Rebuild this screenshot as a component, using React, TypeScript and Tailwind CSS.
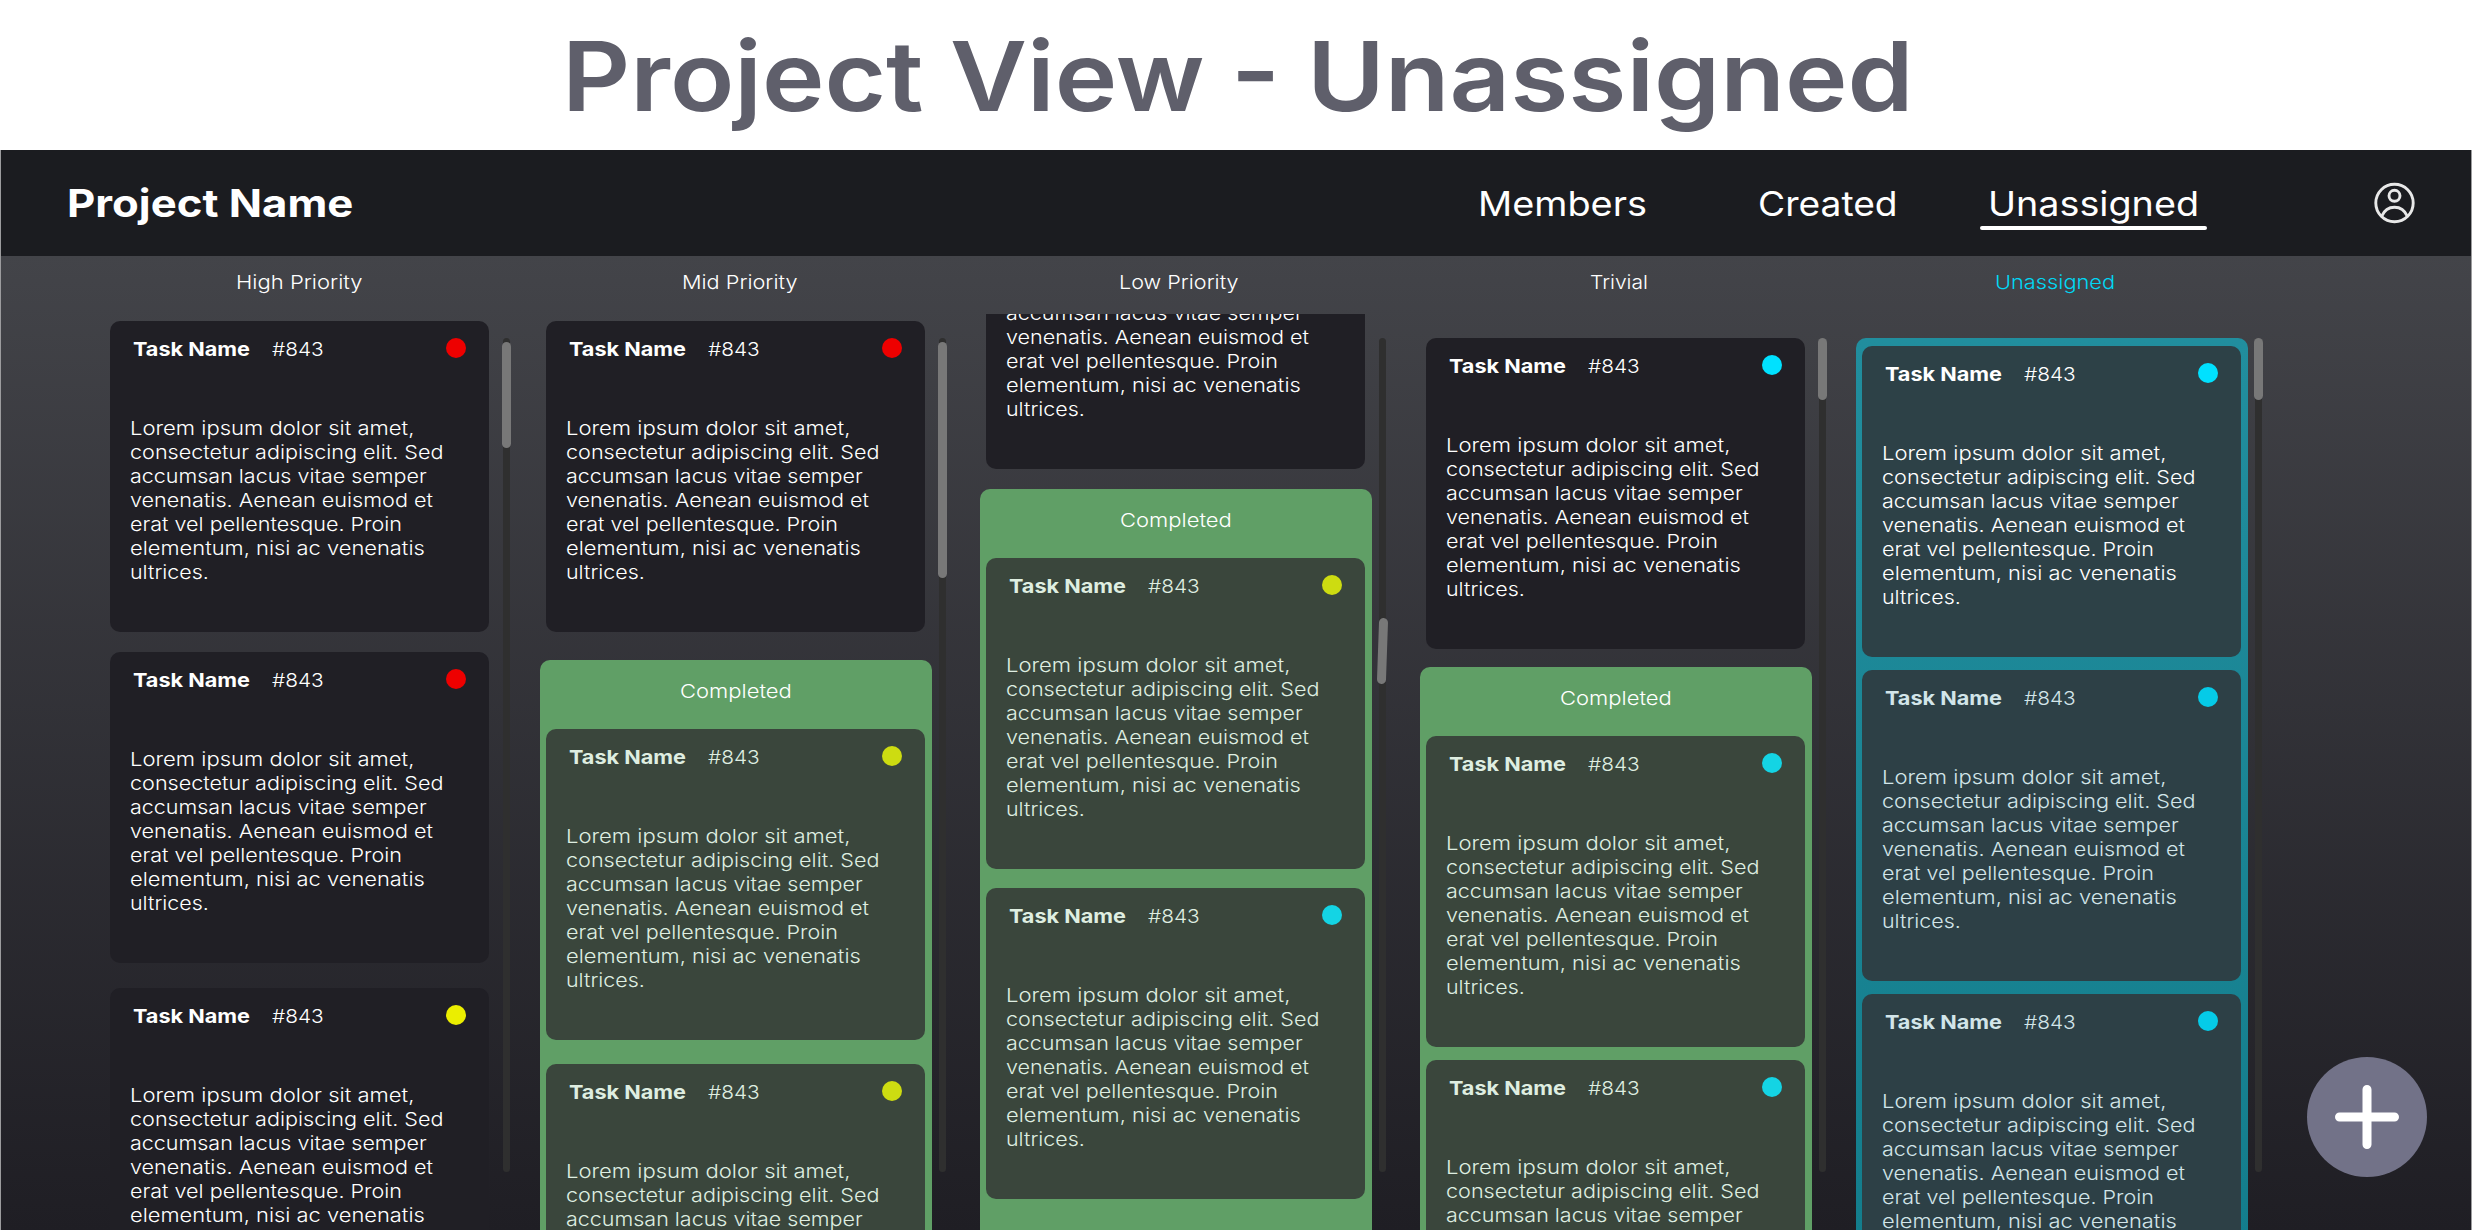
import { useLayoutEffect, useRef, useState } from "react";

/** A single line of text stretched horizontally to an exact advance width. */
function Line({ w, className = "", children }: { w: number; className?: string; children: string }) {
  const ref = useRef<HTMLSpanElement>(null);
  const [scale, setScale] = useState(1);
  useLayoutEffect(() => {
    if (ref.current) setScale(w / ref.current.offsetWidth);
  }, [w]);
  return (
    <span className={`block whitespace-nowrap ${className}`} style={{ width: w }}>
      <span ref={ref} className="inline-block origin-left" style={{ transform: `scaleX(${scale})` }}>
        {children}
      </span>
    </span>
  );
}

const BODY: [string, number][] = [
  ["Lorem ipsum dolor sit amet,", 284],
  ["consectetur adipiscing elit. Sed", 313],
  ["accumsan lacus vitae semper", 297],
  ["venenatis. Aenean euismod et", 303],
  ["erat vel pellentesque. Proin", 272],
  ["elementum, nisi ac venenatis", 294.5],
  ["ultrices.", 79],
];

type Tone = "plain" | "done" | "open" | "openDim";

const CARD: Record<Tone, string> = {
  plain: "bg-[#201f25] text-white",
  done: "bg-[#3a463c] text-[#dfeee1]",
  open: "bg-[#2d4147] text-white",
  openDim: "bg-[#2d4046] text-[#d2e5e9]",
};

function Body({ from = 0, className = "" }: { from?: number; className?: string }) {
  return (
    <div className={`pl-5 text-[19.25px] leading-6 font-light ${className}`}>
      {BODY.slice(from).map(([text, w]) => (
        <Line key={text} w={w}>{text}</Line>
      ))}
    </div>
  );
}

function Card({ tone = "plain", dot, className = "" }: { tone?: Tone; dot: string; className?: string }) {
  return (
    <article className={`h-[311px] w-[379px] shrink-0 rounded-[10px] pt-4 ${CARD[tone]} ${className}`}>
      <header className="flex h-6 items-start px-[23px] leading-6">
        <Line w={117} className="text-[19.25px] font-bold">Task Name</Line>
        <Line w={52} className="ml-[22px] text-[19.25px] font-light">#843</Line>
        <span className={`mt-px ml-auto size-5 rounded-full ${dot}`} />
      </header>
      <Body className="mt-[55px]" />
    </article>
  );
}

/** The lower part of a card whose top is scrolled out of the lane. */
function ScrolledCard() {
  return (
    <article className="h-[155px] w-[379px] shrink-0 overflow-hidden rounded-b-[10px] bg-[#201f25] text-white">
      <Body from={2} className="-mt-[13px]" />
    </article>
  );
}

function Completed({ className = "", children }: { className?: string; children: React.ReactNode }) {
  return (
    <section className={`-ml-1.5 flex w-[392px] shrink-0 flex-col rounded-t-[10px] bg-[#609f66] pl-1.5 ${className}`}>
      <h3 className="flex h-[69px] shrink-0 justify-center pt-[19px] pr-1.5 text-[19.25px] leading-6 font-light text-white">
        <Line w={112}>Completed</Line>
      </h3>
      {children}
    </section>
  );
}

function Scrollbar({ thumb }: { thumb: string }) {
  return (
    <div className="mt-6 ml-[7px] flex h-[834px] w-[7px] shrink-0 justify-center rounded-full bg-[#2f2f2f]">
      <div className={`w-[9px] shrink-0 rounded-full bg-[#787878] ${thumb}`} />
    </div>
  );
}

function Lane({ title, w, titleClass = "", className = "", list, thumb, children }: {
  title: string; w: number; titleClass?: string; className?: string; list: string; thumb: string; children: React.ReactNode;
}) {
  return (
    <section className={`flex shrink-0 flex-col ${className}`}>
      <h2 className={`mt-3.5 flex h-11 shrink-0 text-[19.25px] leading-6 font-light ${titleClass}`}>
        <Line w={w}>{title}</Line>
      </h2>
      <div className="flex h-[916px]">
        <div className={`flex w-[392px] flex-col overflow-hidden pl-1.5 ${list}`}>{children}</div>
        <Scrollbar thumb={thumb} />
      </div>
    </section>
  );
}

export default function App() {
  return (
    <div className="flex h-[1230px] w-[2472px] flex-col overflow-hidden bg-[#9c9c9e] font-['Inter',sans-serif]">
      <h1 className="flex h-[150px] shrink-0 justify-center bg-white pt-[18px] pl-[3px] text-[96.3px] leading-[116px] font-semibold text-[#5f5f6b]">
        <Line w={1352}>Project View - Unassigned</Line>
      </h1>

      <nav className="mx-px flex h-[106px] shrink-0 items-start bg-[#1b1c20] text-white">
        <Line w={286} className="mt-[29px] ml-[66px] text-[38.5px] leading-[48px] font-bold">Project Name</Line>
        <div className="ml-[1125px] flex text-[34.5px] leading-[42px]">
          <Line w={169} className="mt-[33px]">Members</Line>
          <Line w={140} className="mt-[33px] ml-[111px]">Created</Line>
          <div className="mt-[33px] ml-[82px] flex h-12 w-[227px] flex-col items-center">
            <Line w={211}>Unassigned</Line>
            <span className="mt-px h-1 w-[227px] shrink-0 rounded-full bg-white" />
          </div>
        </div>
        <svg className="mt-8 ml-[166px] size-[42px]" viewBox="0 0 42 42" fill="none" stroke="#e8e8e8" strokeWidth="2.9">
          <circle cx="21.500" cy="21" r="18.7" />
          <circle cx="21.500" cy="13.8" r="5.5" />
          <path d="M8.700 34.2C11.100 28.6 15.900 25.2 21.500 25.2s10.400 3.400 12.800 9" />
        </svg>
      </nav>

      <main className="relative mx-px flex flex-1 bg-linear-to-b from-[#434449] to-[#1f1e24] pl-[103px] text-white">
        <Lane title="High Priority" w={127} titleClass="pl-[132px]" list="pt-[7px] gap-5" thumb="mt-1 h-[106px]">
          <Card dot="bg-[#ee0000]" />
          <Card dot="bg-[#ee0000]" />
          <Card dot="bg-[#ebee00]" className="mt-[5px]" />
        </Lane>

        <Lane title="Mid Priority" w={115} titleClass="pl-[142px]" className="ml-[30px]" list="pt-[7px]" thumb="mt-1 h-[236px]">
          <Card dot="bg-[#ee0000]" />
          <Completed className="mt-7">
            <Card tone="done" dot="bg-[#cddc11]" />
            <Card tone="done" dot="bg-[#cddc11]" className="mt-6" />
          </Completed>
        </Lane>

        <Lane title="Low Priority" w={120} titleClass="pl-[139px]" className="ml-[34px]" list="" thumb="mt-[280px] h-[66px] rotate-2">
          <ScrolledCard />
          <Completed className="mt-5 h-[741px]">
            <Card tone="done" dot="bg-[#cddc11]" />
            <Card tone="done" dot="bg-[#14d4e4]" className="mt-[19px]" />
          </Completed>
        </Lane>

        <Lane title="Trivial" w={58} titleClass="pl-[170px]" className="ml-[34px]" list="pt-6" thumb="h-[62px]">
          <Card dot="bg-[#00e1ff]" />
          <Completed className="mt-[18px]">
            <Card tone="done" dot="bg-[#14d4e4]" />
            <Card tone="done" dot="bg-[#14d4e4]" className="mt-[13px]" />
          </Completed>
        </Lane>

        <Lane title="Unassigned" w={120} titleClass="pl-[139px] text-[#00d8f5]" className="ml-[30px]" list="pt-6" thumb="h-[62px]">
          <section className="-ml-1.5 flex w-[392px] shrink-0 flex-col gap-[13px] rounded-t-[10px] bg-linear-to-b from-[#218e9e] to-[#127c8b] pt-2 pl-1.5">
            <Card tone="open" dot="bg-[#00e1ff]" />
            <Card tone="openDim" dot="bg-[#05cbe8]" />
            <Card tone="openDim" dot="bg-[#05cbe8]" />
          </section>
        </Lane>

        <button className="absolute right-[44px] bottom-[53px] flex size-[120px] items-center justify-center rounded-full bg-[#727288]">
          <svg className="size-16" viewBox="0 0 64 64" stroke="#fff" strokeWidth="9" strokeLinecap="round">
            <path d="M32 4.500V59.500M4.500 32H59.500" />
          </svg>
        </button>
      </main>
    </div>
  );
}
